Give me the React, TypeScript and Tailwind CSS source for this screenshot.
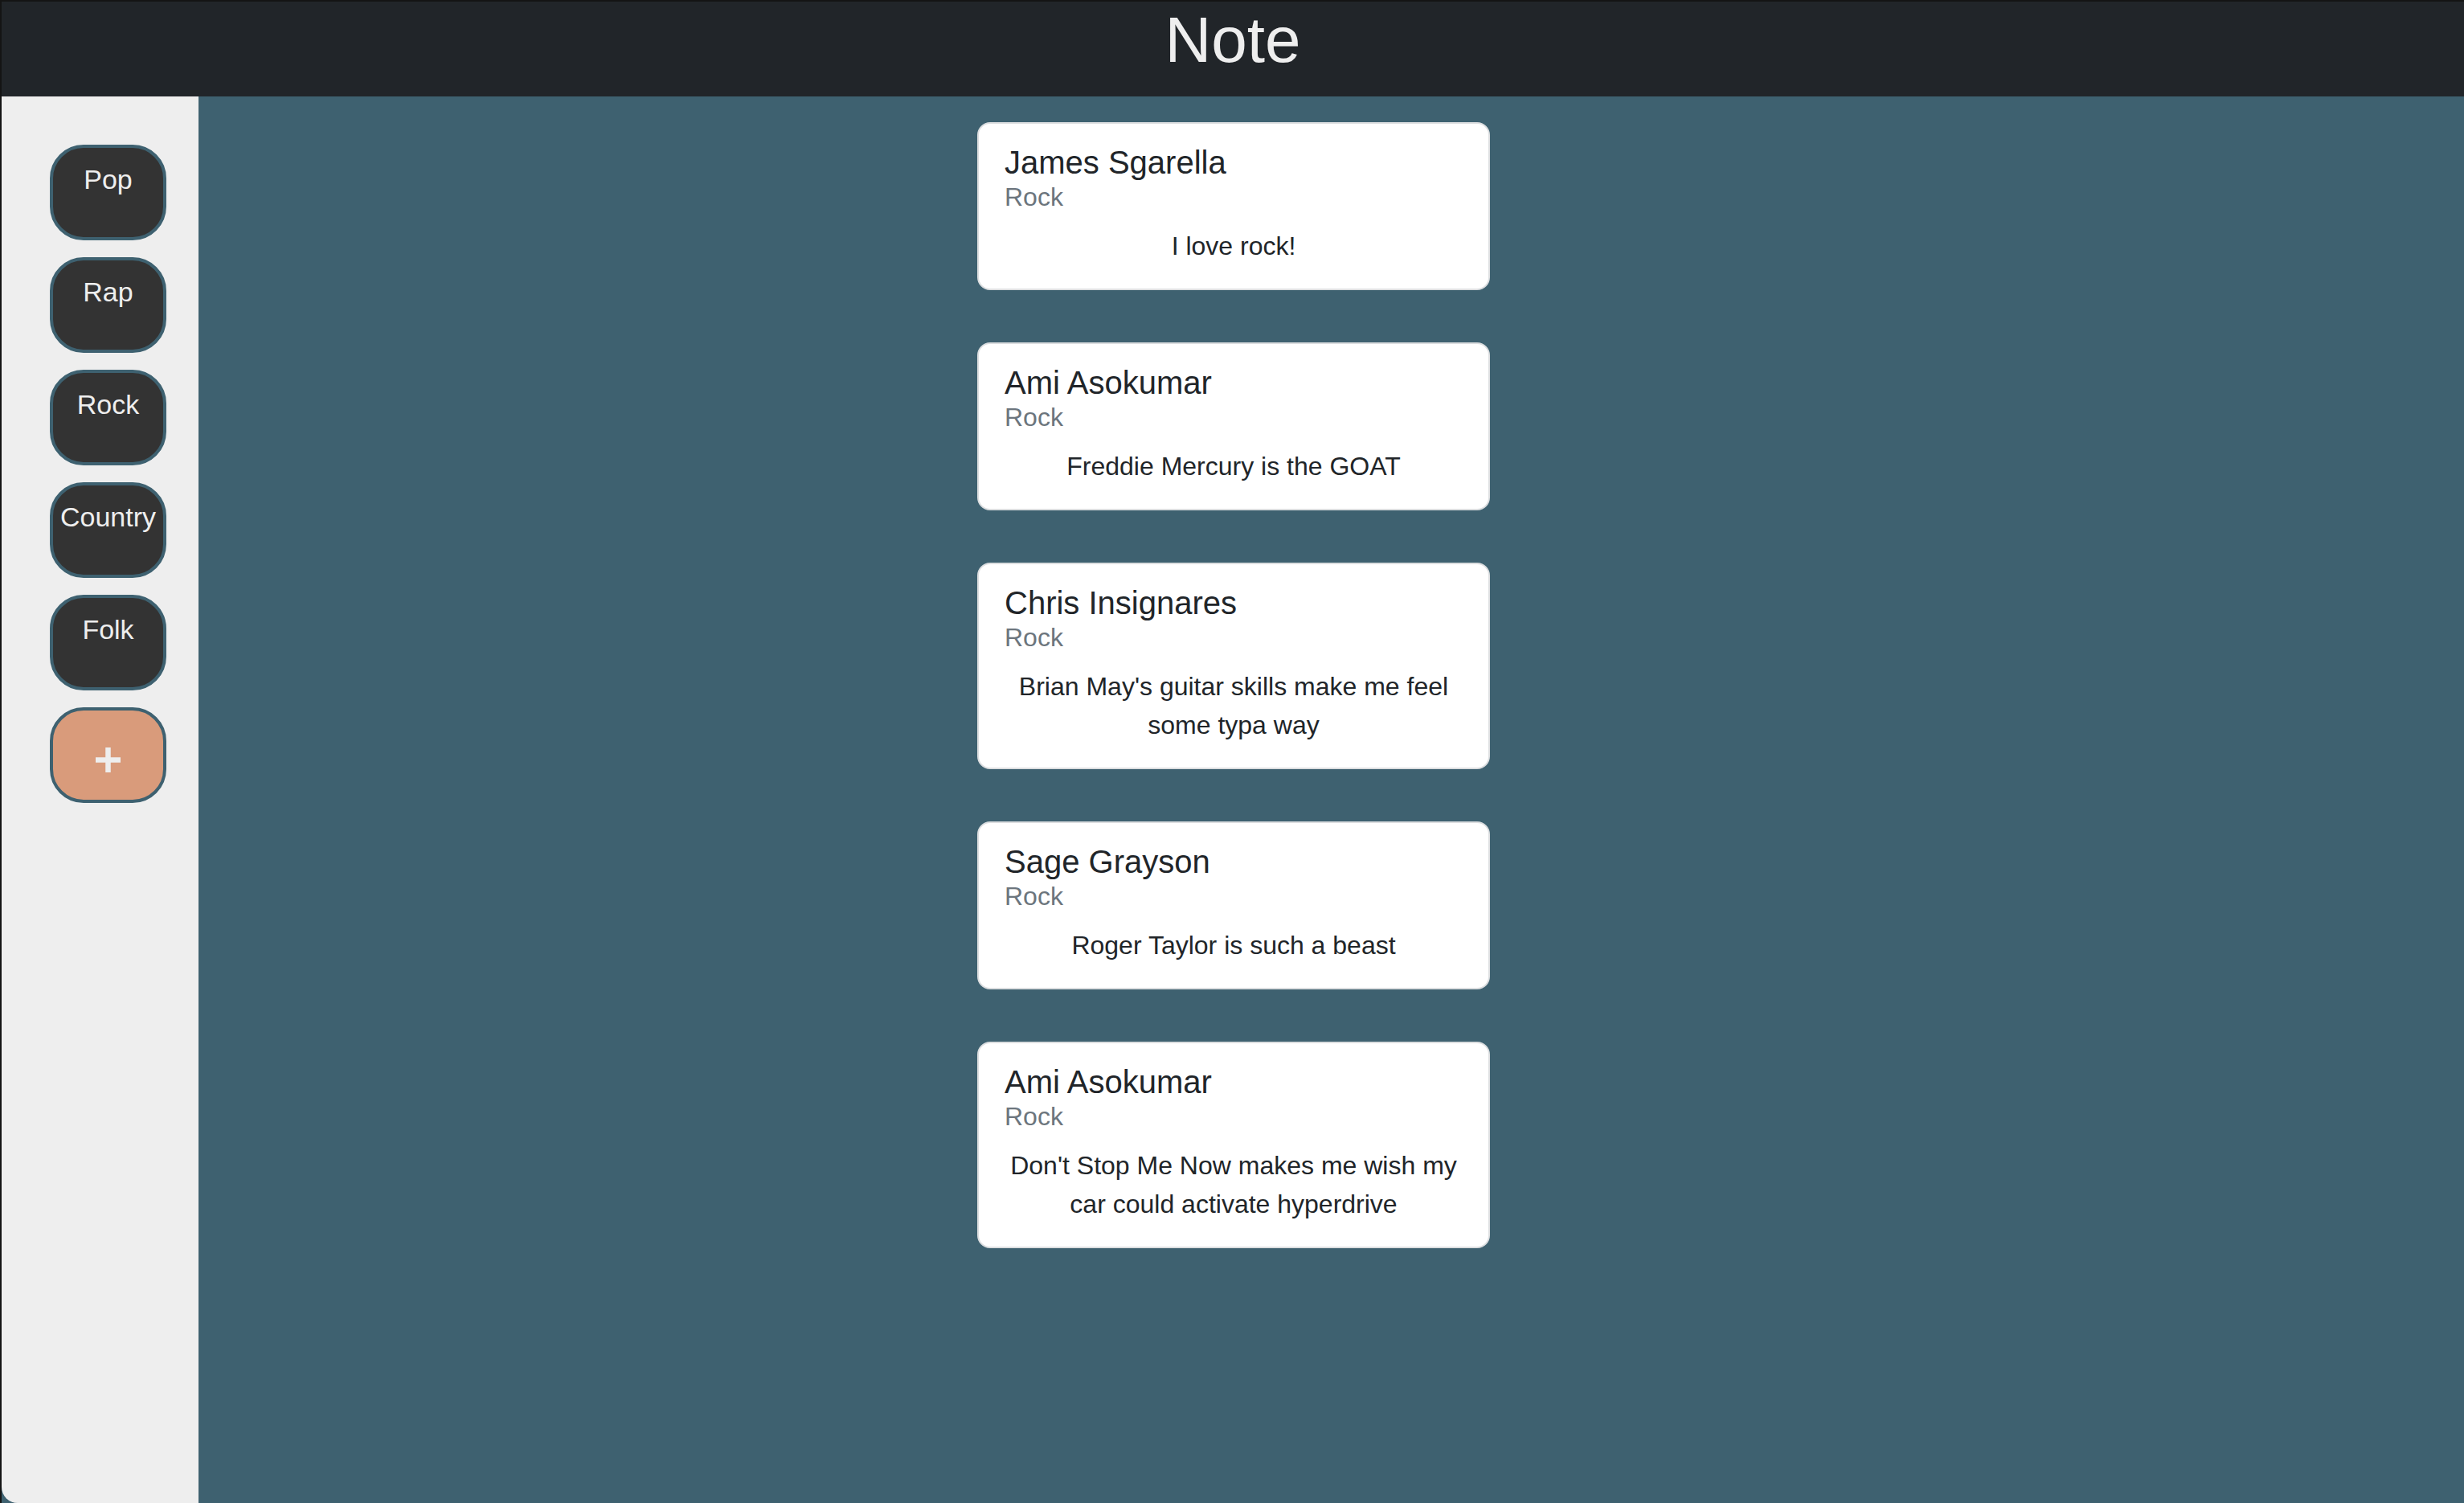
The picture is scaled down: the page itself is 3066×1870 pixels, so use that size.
const genres = ["Pop", "Rap", "Rock", "Country", "Folk"];

const notes = [
  { name: "James Sgarella", genre: "Rock", text: "I love rock!" },
  { name: "Ami Asokumar", genre: "Rock", text: "Freddie Mercury is the GOAT" },
  { name: "Chris Insignares", genre: "Rock", text: "Brian May's guitar skills make me feel some typa way" },
  { name: "Sage Grayson", genre: "Rock", text: "Roger Taylor is such a beast" },
  { name: "Ami Asokumar", genre: "Rock", text: "Don't Stop Me Now makes me wish my car could activate hyperdrive" },
];

function GenreButton({ label }: { label: string }) {
  return (
    <button className="w-[145px] h-[119px] shrink-0 rounded-[42px] border-4 border-[#3e6170] bg-[#333333] text-[#eeeeee] text-[34px] leading-[39px] pt-[20px] flex justify-center items-start">
      {label}
    </button>
  );
}

function NoteCard({ name, genre, text }: { name: string; genre: string; text: string }) {
  return (
    <div className="w-[638px] bg-white border-2 border-[#dcdee0] rounded-[16px] px-[32px] pt-[24px] pb-[29px]">
      <h5 className="text-[40px] leading-[48px] text-[#212529]">{name}</h5>
      <h6 className="text-[32px] leading-[38px] text-[#6c757d]">{genre}</h6>
      <p className="mt-[18px] text-[32px] leading-[48px] text-center text-[#212529]">{text}</p>
    </div>
  );
}

export default function App() {
  return (
    <div className="min-h-screen flex flex-col bg-[#3e6170] border-l-2 border-[#141414] font-['Liberation_Sans',Arial,sans-serif]">
      {/* Header */}
      <header className="h-[120px] shrink-0 bg-[#212529] border-t-2 border-[#141414] text-center">
        <h1 className="text-[80px] leading-[96px] text-[#eeeeee]">Note</h1>
      </header>

      <div className="flex flex-1">
        {/* Sidebar */}
        <aside className="w-[245px] shrink-0 bg-[#eeeeee] flex flex-col items-start gap-[21px] pl-[60px] pt-[60px] rounded-bl-[20px]">
          {genres.map((g) => (
            <GenreButton key={g} label={g} />
          ))}
          <button className="w-[145px] h-[119px] shrink-0 rounded-[42px] border-4 border-[#3e6170] bg-[#d99b7b] flex justify-center items-start pt-[46px]">
            <svg width="31" height="31" viewBox="0 0 31 31">
              <path d="M15.5 0 V31 M0 15.5 H31" stroke="#eeeeee" strokeWidth="6.5" />
            </svg>
          </button>
        </aside>

        {/* Notes */}
        <main className="flex-1 flex flex-col items-center gap-[65px] pt-[32px] pb-[60px] pl-[2px] pr-[245px]">
          {notes.map((n, i) => (
            <NoteCard key={i} {...n} />
          ))}
        </main>
      </div>
    </div>
  );
}
